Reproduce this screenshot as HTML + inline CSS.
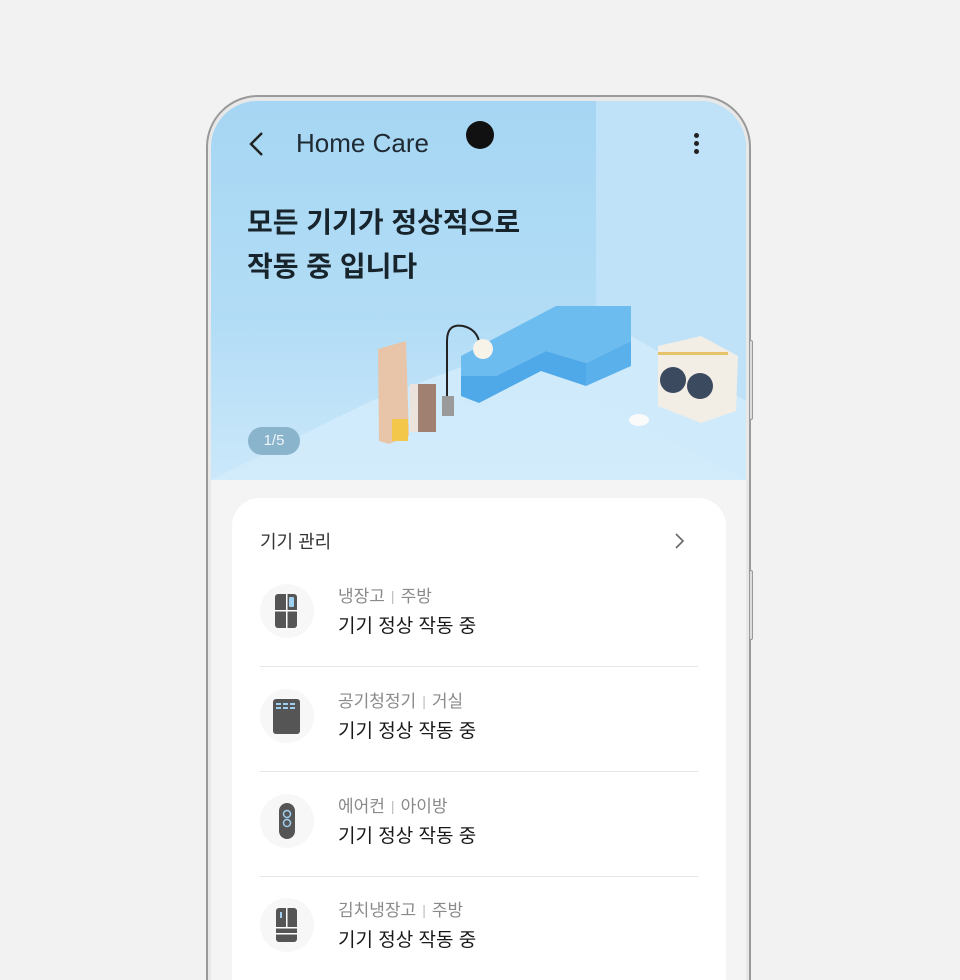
<!DOCTYPE html>
<html><head><meta charset="utf-8"><style>
*{margin:0;padding:0;box-sizing:border-box}
html,body{width:960px;height:980px;overflow:hidden}
body{background:#f2f2f2;font-family:"Liberation Sans","Noto Sans CJK KR",sans-serif}
.clip{position:relative;width:960px;height:980px;overflow:hidden}
.frame{position:absolute;left:206px;top:95px;width:545px;height:1000px;border:2px solid #9a9a9a;border-radius:52px;background:#e8e8e8}
.screen{position:absolute;left:211px;top:101px;width:535px;height:990px;border-radius:46px 46px 0 0;overflow:hidden;background:#f4f4f4}
.banner{position:absolute;left:0;top:0;width:535px;height:379px;background:linear-gradient(180deg,#a6d6f3 0%,#b3ddf6 60%,#cbe8fa 100%)}
.btn{position:absolute;left:749px;width:4px;border:1px solid #999;border-radius:2px;background:#ddd}
.t{position:absolute;white-space:nowrap}
.card{position:absolute;left:21px;top:397px;width:494px;height:600px;background:#fff;border-radius:28px}
.row{position:absolute;left:0;width:494px;height:105px}
.ic{position:absolute;left:28px;top:22px;width:54px;height:54px;border-radius:50%;background:#f7f7f7}
.l1{position:absolute;left:106px;top:20px;font-size:17px;color:#8a8a8a}
.l1 b{font-weight:normal;color:#bbb;font-size:14px;margin:0 6px;position:relative;top:-1px}
.l2{position:absolute;left:106px;top:49px;font-size:19px;color:#1a1a1a}
.sep{position:absolute;left:28px;right:28px;bottom:0;height:1px;background:#e6e6e6}
</style></head><body><div class="clip">
<div class="frame"></div>
<div class="btn" style="top:340px;height:80px"></div>
<div class="btn" style="top:570px;height:70px"></div>
<div class="screen">
 <div class="banner">
  <svg width="535" height="379" style="position:absolute;left:0;top:0">
   <polygon points="385,0 535,0 535,379 385,300" fill="#bfe2f8"/>
   <polygon points="0,379 160,300 385,215 535,300 535,379" fill="#d3ecfb" opacity=".8"/>
   <polygon points="250,255 345,205 420,205 420,240 375,262 335,250 285,275 250,275" fill="#6cbcf0"/>
   <polygon points="250,275 285,275 335,250 375,262 375,285 330,270 268,302 250,295" fill="#4fa8e8"/>
   <polygon points="375,262 420,240 420,265 375,285" fill="#5ab0ea"/>
   <path d="M236,305 V240 Q236,222 252,225 Q265,228 268,240" stroke="#222" stroke-width="2" fill="none"/>
   <circle cx="272" cy="248" r="10" fill="#f7f3e8"/>
   <rect x="231" y="295" width="12" height="20" fill="#9a9a9a"/>
   <polygon points="167,248 195,240 198,335 178,343 168,340" fill="#e8c5a8"/>
   <rect x="181" y="318" width="16" height="22" fill="#f3c84a"/>
   <rect x="199" y="283" width="26" height="48" fill="#a08070"/>
   <rect x="199" y="283" width="8" height="48" fill="#ece4dc"/>
   <polygon points="447,245 490,235 527,255 525,310 490,322 447,305" fill="#f3eee5"/>
   <circle cx="462" cy="279" r="13" fill="#3c4a60"/>
   <circle cx="489" cy="285" r="13" fill="#3c4a60"/>
   <rect x="447" y="251" width="70" height="3" fill="#e6c36b"/>
   <ellipse cx="428" cy="319" rx="10" ry="6" fill="#fafafa"/>
  </svg>
  <svg style="position:absolute;left:36px;top:30px" width="20" height="28"><path d="M15,2 L4,13 L15,24" stroke="#222" stroke-width="2.4" fill="none"/></svg>
  <div class="t" style="left:85px;top:27px;font-size:26px;color:#1f2a33">Home Care</div>
  <div style="position:absolute;left:255px;top:20px;width:28px;height:28px;border-radius:50%;background:#111"></div>
  <div style="position:absolute;left:483px;top:32px;width:5px;height:5px;border-radius:50%;background:#222;box-shadow:0 8px 0 #222,0 16px 0 #222"></div>
  <div class="t" style="left:36px;top:100px;font-size:28px;font-weight:bold;color:#18242c;line-height:44px">모든 기기가 정상적으로<br>작동 중 입니다</div>
  <div class="t" style="left:37px;top:326px;width:52px;height:28px;border-radius:14px;background:#8ab3cc;color:#f0f6fa;font-size:15px;text-align:center;line-height:28px">1/5</div>
 </div>
 <div class="card">
  <div class="t" style="left:28px;top:30px;font-size:18px;color:#333">기기 관리</div>
  <svg style="position:absolute;left:441px;top:34px" width="12" height="18"><path d="M3,2 L10,9 L3,16" stroke="#666" stroke-width="1.6" fill="none"/></svg>
  <div class="row" style="top:64px"><div class="ic"><svg width="54" height="54"><rect x="15" y="10" width="22" height="34" rx="3" fill="#555"/><rect x="26" y="10" width="1.5" height="34" fill="#fff"/><rect x="15" y="26" width="22" height="1.5" fill="#fff"/><rect x="29" y="13" width="5" height="10" rx="1" fill="#9fd0f0"/></svg></div><div class="l1">냉장고<b>|</b>주방</div><div class="l2">기기 정상 작동 중</div><div class="sep"></div></div>
  <div class="row" style="top:169px"><div class="ic"><svg width="54" height="54"><rect x="13" y="10" width="27" height="35" rx="3" fill="#555"/><rect x="16" y="14" width="5" height="2" fill="#9fd0f0"/><rect x="23" y="14" width="5" height="2" fill="#9fd0f0"/><rect x="30" y="14" width="5" height="2" fill="#9fd0f0"/><rect x="16" y="18" width="5" height="2" fill="#9fd0f0"/><rect x="23" y="18" width="5" height="2" fill="#9fd0f0"/><rect x="30" y="18" width="5" height="2" fill="#9fd0f0"/></svg></div><div class="l1">공기청정기<b>|</b>거실</div><div class="l2">기기 정상 작동 중</div><div class="sep"></div></div>
  <div class="row" style="top:274px"><div class="ic"><svg width="54" height="54"><rect x="19" y="9" width="16" height="36" rx="8" fill="#555"/><circle cx="27" cy="20" r="3.5" stroke="#9fd0f0" stroke-width="1.5" fill="none"/><circle cx="27" cy="29" r="3.5" stroke="#9fd0f0" stroke-width="1.5" fill="none"/></svg></div><div class="l1">에어컨<b>|</b>아이방</div><div class="l2">기기 정상 작동 중</div><div class="sep"></div></div>
  <div class="row" style="top:378px"><div class="ic"><svg width="54" height="54"><rect x="16" y="10" width="21" height="34" rx="3" fill="#555"/><rect x="16" y="29" width="21" height="1.5" fill="#fff"/><rect x="16" y="35" width="21" height="1.5" fill="#fff"/><rect x="26" y="10" width="1.5" height="19" fill="#fff"/><rect x="20" y="14" width="2" height="6" fill="#9fd0f0"/></svg></div><div class="l1">김치냉장고<b>|</b>주방</div><div class="l2">기기 정상 작동 중</div></div>
 </div>
</div>
</div></body></html>
